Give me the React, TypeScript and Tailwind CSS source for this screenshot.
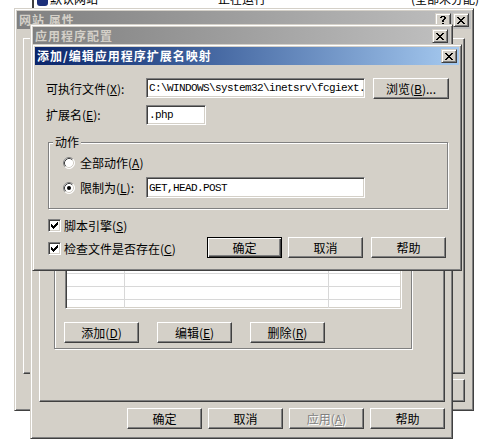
import React from 'react';

// classic Windows 2000 dialogs stacked over the IIS site list

const CLOSE = ['##....##', '.##..##.', '..####..', '...##...', '..####..', '.##..##.', '##....##'];
const HELP = ['.####.', '##..##', '....##', '...##.', '..##..', '..##..', '......', '..##..', '..##..'];
const CHECK = ['......#', '.....##', '#...###', '##.###.', '#####..', '.###...', '..#....'];

function Px({ rows, color = '#000' }: { rows: string[]; color?: string }) {
  const w = rows[0].length;
  const h = rows.length;
  return (
    <svg width={w} height={h} viewBox={`0 0 ${w} ${h}`} shapeRendering="crispEdges">
      {rows.flatMap((r, y) =>
        r.split('').map((c, x) =>
          c === '#' ? <rect key={`${x}-${y}`} x={x} y={y} width={1} height={1} fill={color} /> : null
        )
      )}
    </svg>
  );
}

function Mn({ t, k, tail = '' }: { t: string; k: string; tail?: string }) {
  return (
    <>
      {t}(<u>{k}</u>){tail}
    </>
  );
}

function CapBtn({ rows }: { rows: string[] }) {
  return (
    <div className="w-[16px] h-[14px] flex items-center justify-center bg-[#d4d0c8] border border-t-[#d4d0c8] border-l-[#d4d0c8] border-r-[#404040] border-b-[#404040] shadow-[inset_1px_1px_#fff,inset_-1px_-1px_#808080]">
      <Px rows={rows} />
    </div>
  );
}

function TitleBar({ title, active = false, help = false }: { title: string; active?: boolean; help?: boolean }) {
  return (
    <div
      className={`flex items-center h-[18px] shrink-0 pl-[2px] pr-[2px] ${
        active
          ? 'bg-linear-to-r from-[#0a246a] to-[#a6caf0] text-white'
          : 'bg-linear-to-r from-[#808080] to-[#c0c0c0] text-[#d4d0c8]'
      }`}
    >
      <span className="font-bold text-[12px] leading-[14px] tracking-[1px] whitespace-nowrap">{title}</span>
      <div className="ml-auto flex gap-[2px]">
        {help && <CapBtn rows={HELP} />}
        <CapBtn rows={CLOSE} />
      </div>
    </div>
  );
}

function Frame({ className, children }: { className: string; children: React.ReactNode }) {
  return (
    <div
      className={`absolute flex flex-col bg-[#d4d0c8] p-[2px] border border-t-[#d4d0c8] border-l-[#d4d0c8] border-r-[#404040] border-b-[#404040] shadow-[inset_1px_1px_#fff,inset_-1px_-1px_#808080] ${className}`}
    >
      {children}
    </div>
  );
}

function Btn({
  className = '',
  def = false,
  disabled = false,
  children,
}: {
  className?: string;
  def?: boolean;
  disabled?: boolean;
  children: React.ReactNode;
}) {
  const edge = def
    ? 'border border-black shadow-[inset_1px_1px_#fff,inset_-1px_-1px_#404040,inset_-2px_-2px_#808080]'
    : 'border border-t-white border-l-white border-r-[#404040] border-b-[#404040] shadow-[inset_-1px_-1px_#808080]';
  return (
    <div
      className={`flex items-center justify-center shrink-0 bg-[#d4d0c8] whitespace-nowrap ${edge} ${
        disabled ? 'text-[#808080] [text-shadow:1px_1px_0_#fff]' : 'text-black'
      } ${className}`}
    >
      {children}
    </div>
  );
}

function Field({ className, children }: { className: string; children?: React.ReactNode }) {
  return (
    <div
      className={`flex items-center shrink-0 bg-white pl-[2px] overflow-hidden whitespace-nowrap border border-t-[#808080] border-l-[#808080] border-r-white border-b-white shadow-[inset_1px_1px_#404040,inset_-1px_-1px_#d4d0c8] font-['Liberation_Mono',monospace] text-[11px] tracking-[-0.6px] ${className}`}
    >
      {children}
    </div>
  );
}

function Check() {
  return (
    <div className="w-[13px] h-[13px] shrink-0 flex items-center justify-center bg-white border border-t-[#808080] border-l-[#808080] border-r-white border-b-white shadow-[inset_1px_1px_#404040,inset_-1px_-1px_#d4d0c8]">
      <Px rows={CHECK} />
    </div>
  );
}

function Radio({ on = false }: { on?: boolean }) {
  return (
    <svg width="12" height="12" viewBox="0 0 12 12" className="shrink-0">
      <circle cx="6" cy="6" r="5.5" fill="#fff" />
      <path d="M2.11 9.89 A5.5 5.5 0 0 1 9.89 2.11" stroke="#808080" fill="none" />
      <path d="M9.89 2.11 A5.5 5.5 0 0 1 2.11 9.89" stroke="#fff" fill="none" />
      <path d="M2.82 9.18 A4.5 4.5 0 0 1 9.18 2.82" stroke="#404040" fill="none" />
      <path d="M9.18 2.82 A4.5 4.5 0 0 1 2.82 9.18" stroke="#d4d0c8" fill="none" />
      {on && <circle cx="6" cy="6" r="2" fill="#000" />}
    </svg>
  );
}

export default function App() {
  const rows = Array.from({ length: 17 });

  return (
    <div className="relative w-[497px] h-[439px] overflow-hidden bg-white text-black font-['Noto_Sans_CJK_SC',sans-serif] text-[12px] leading-[14px]">
      {/* site list behind the dialogs, only its bottom edge shows */}
      <div className="h-[8px] overflow-hidden">
        <div className="flex items-start -mt-[8px] h-[16px]">
          <div className="ml-[32px] w-[2px] h-[16px] bg-[#404040]" />
          <div className="ml-[3px] mt-[2px] w-[11px] h-[12px] rounded-[3px] bg-[#1c2f7a]" />
          <span className="ml-[2px] w-[168px]">默认网站</span>
          <span className="w-[193px]">正在运行</span>
          <span>(全部未分配)</span>
        </div>
      </div>

      {/* 网站 属性 */}
      <Frame className="left-[14px] top-[8px] w-[460px] h-[403px]">
        <TitleBar title="网站 属性" help />
        <div className="ml-[6px] mt-[9px] w-[442px] h-[336px] border border-t-white border-l-white border-r-[#404040] border-b-[#404040] shadow-[inset_-1px_-1px_#808080]" />
        <div className="flex justify-end gap-[6px] w-[448px] mt-[5px]">
          <Btn className="w-[75px] h-[23px]">确定</Btn>
          <Btn className="w-[75px] h-[23px]">取消</Btn>
          <Btn className="w-[75px] h-[23px]" disabled>
            <Mn t="应用" k="A" />
          </Btn>
          <Btn className="w-[75px] h-[23px]">帮助</Btn>
        </div>
      </Frame>

      {/* 应用程序配置 */}
      <Frame className="left-[30px] top-[24px] w-[423px] h-[415px]">
        <TitleBar title="应用程序配置" />
        <div className="ml-[6px] mt-[25px] w-[406px] h-[332px] flex flex-col border border-t-white border-l-white border-r-[#404040] border-b-[#404040] shadow-[inset_-1px_-1px_#808080]">
          <div className="ml-[14px] mt-[10px] w-[358px] pb-[5px] flex flex-col border border-[#808080] shadow-[inset_1px_1px_#fff,1px_1px_#fff]">
            <div className="ml-[10px] mt-[8px] w-[337px] h-[219px] p-[1px] overflow-hidden bg-white border border-t-[#808080] border-l-[#808080] border-r-white border-b-white shadow-[inset_1px_1px_#404040,inset_-1px_-1px_#d4d0c8]">
              {rows.map((_, i) => (
                <div key={i} className="flex h-[13px] border-b border-[#d8d8d8]">
                  <div className="w-[58px] border-r border-[#d8d8d8]" />
                  <div className="w-[204px] border-r border-[#d8d8d8]" />
                  <div className="flex-1" />
                </div>
              ))}
            </div>
            <div className="ml-[9px] mt-[13px] flex gap-[18px]">
              <Btn className="w-[75px] h-[21px]">
                <Mn t="添加" k="D" />
              </Btn>
              <Btn className="w-[75px] h-[21px]">
                <Mn t="编辑" k="E" />
              </Btn>
              <Btn className="w-[75px] h-[21px]">
                <Mn t="删除" k="R" />
              </Btn>
            </div>
          </div>
        </div>
        <div className="ml-[94px] mt-[6px] flex gap-[6px]">
          <Btn className="w-[75px] h-[21px]">确定</Btn>
          <Btn className="w-[75px] h-[21px]">取消</Btn>
          <Btn className="w-[75px] h-[21px]" disabled>
            <Mn t="应用" k="A" />
          </Btn>
          <Btn className="w-[75px] h-[21px]">帮助</Btn>
        </div>
      </Frame>

      {/* 添加/编辑应用程序扩展名映射 */}
      <Frame className="left-[32px] top-[44px] w-[430px] h-[227px]">
        <TitleBar title="添加/编辑应用程序扩展名映射" active />
        <div className="flex flex-col pl-[11px]">
          <div className="mt-[13px] flex items-center h-[21px]">
            <span className="w-[100px]">
              <Mn t="可执行文件" k="X" tail=":" />
            </span>
            <Field className="w-[219px] h-[20px] self-start">{'C:\\WINDOWS\\system32\\inetsrv\\fcgiext.'}</Field>
            <Btn className="ml-[8px] w-[76px] h-[21px]">
              <Mn t="浏览" k="B" tail="..." />
            </Btn>
          </div>

          <div className="mt-[6px] flex items-center h-[20px]">
            <span className="w-[100px]">
              <Mn t="扩展名" k="E" tail=":" />
            </span>
            <Field className="w-[60px] h-[20px]">.php</Field>
          </div>

          <div className="relative ml-[2px] mt-[17px] w-[400px] h-[67px] flex flex-col pl-[14px] border border-[#808080] shadow-[inset_1px_1px_#fff,1px_1px_#fff]">
            <span className="absolute left-[4px] -top-[8px] px-[2px] bg-[#d4d0c8]">动作</span>
            <div className="mt-[10px] h-[20px] flex items-center">
              <Radio />
              <span className="ml-[5px]">
                <Mn t="全部动作" k="A" />
              </span>
            </div>
            <div className="mt-[4px] h-[21px] flex items-center">
              <Radio on />
              <span className="ml-[5px] w-[66px]">
                <Mn t="限制为" k="L" tail=":" />
              </span>
              <Field className="w-[219px] h-[21px]">GET,HEAD.POST</Field>
            </div>
          </div>

          <div className="mt-[10px] flex">
            <div className="ml-[2px] w-[159px] flex flex-col">
              <div className="h-[13px] flex items-center">
                <Check />
                <span className="ml-[3px]">
                  <Mn t="脚本引擎" k="S" />
                </span>
              </div>
              <div className="mt-[10px] h-[13px] flex items-center">
                <Check />
                <span className="ml-[3px]">
                  <Mn t="检查文件是否存在" k="C" />
                </span>
              </div>
            </div>
            <div className="mt-[18px] flex">
              <Btn className="w-[75px] h-[21px]" def>
                确定
              </Btn>
              <Btn className="ml-[6px] w-[75px] h-[21px]">取消</Btn>
              <Btn className="ml-[8px] w-[75px] h-[21px]">帮助</Btn>
            </div>
          </div>
        </div>
      </Frame>
    </div>
  );
}
